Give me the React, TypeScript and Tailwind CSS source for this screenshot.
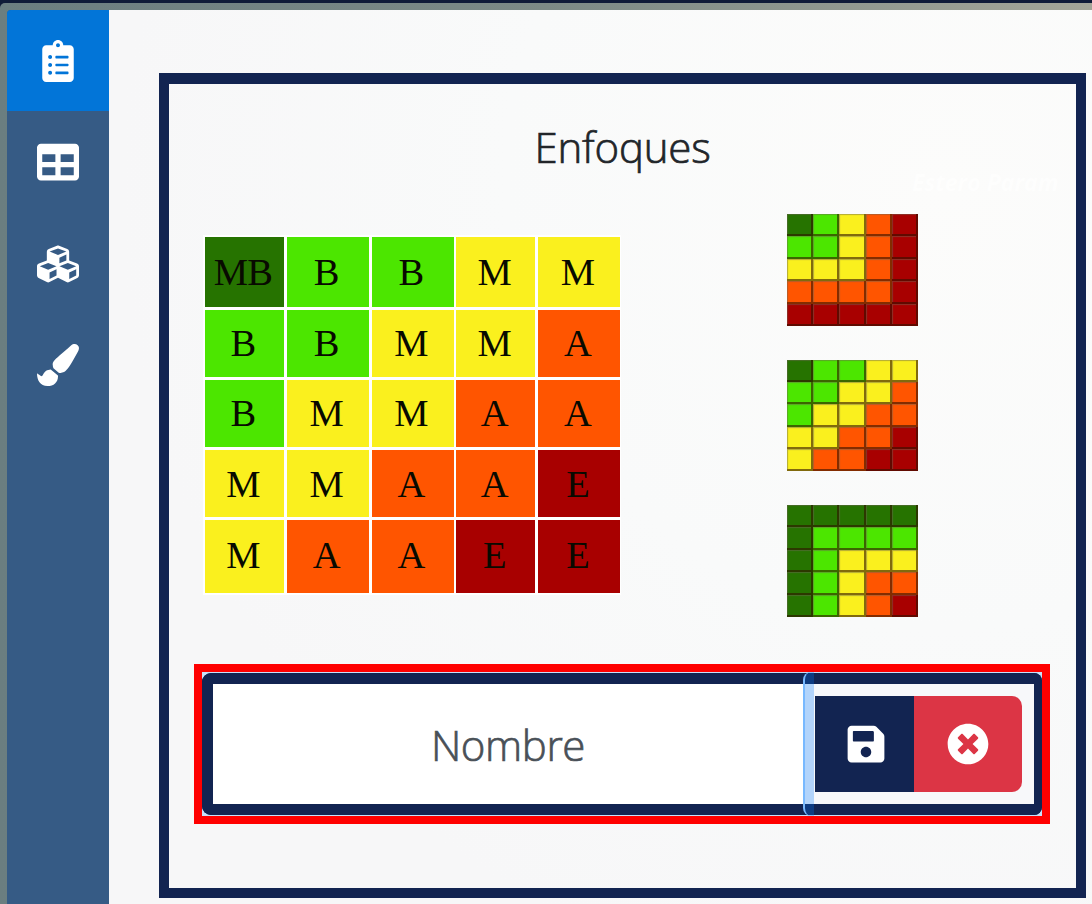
import React from 'react';
import { FaClipboardList, FaTable, FaCubes, FaPaintBrush, FaSave, FaTimesCircle } from 'react-icons/fa';

type Level = 'MB' | 'B' | 'M' | 'A' | 'E';

const fill: Record<Level, string> = {
  MB: 'bg-[#267300]',
  B: 'bg-[#4ce600]',
  M: 'bg-[#faf01e]',
  A: 'bg-[#ff5500]',
  E: 'bg-[#a80000]',
};

const parse = (rows: string[]): Level[] => rows.flatMap((row) => row.split(' ') as Level[]);

const balanced = parse(['MB B B M M', 'B B M M A', 'B M M A A', 'M M A A E', 'M A A E E']);
const pessimistic = parse(['MB B M A E', 'B B M A E', 'M M M A E', 'A A A A E', 'E E E E E']);
const optimistic = parse(['MB MB MB MB MB', 'MB B B B B', 'MB B M M M', 'MB B M A A', 'MB B M A E']);

const tabs = [FaClipboardList, FaTable, FaCubes, FaPaintBrush];

function Sidebar() {
  return (
    <nav className="flex w-[101.5px] shrink-0 flex-col overflow-hidden rounded-tl-[4px] bg-[#365b85]">
      {tabs.map((Icon, i) => (
        <button
          key={i}
          className={`flex h-[101.5px] shrink-0 items-center justify-center pt-[1px] pr-[0.5px] text-[42px] text-white ${i === 0 ? 'bg-[#0275d8]' : ''}`}
        >
          <Icon />
        </button>
      ))}
    </nav>
  );
}

function Matrix() {
  return (
    <div className="grid w-[418px] grid-cols-[79px_82px_82px_79px_82px] grid-rows-[70px_67px_67px_67px_73px] gap-x-[2.75px] gap-y-[3px] bg-white p-[2px] font-['Liberation_Serif',serif] text-[38.5px] leading-none tracking-[-0.8px] text-[#080a00]">
      {balanced.map((level, i) => (
        <div key={i} className={`flex items-center justify-center pr-[3px] ${fill[level]}`}>
          <span className={i < 15 ? '' : i < 20 ? 'mt-[2px]' : '-mt-[3px]'}>{level}</span>
        </div>
      ))}
    </div>
  );
}

function Thumbnail({ cells }: { cells: Level[] }) {
  return (
    <button className="grid h-[112px] w-[131px] grid-cols-5 grid-rows-5">
      {cells.map((level, i) => (
        <span
          key={i}
          className={`border-r-2 border-b-2 border-[#301000]/60 shadow-[inset_1px_1px_1px_rgba(110,100,80,0.5)] ${fill[level]}`}
        />
      ))}
    </button>
  );
}

function NameForm() {
  return (
    <div className="relative ml-[25px] flex h-[160px] w-[856px] border-8 border-[#ff0000] bg-[#c7e1fb]">
      <div className="mt-px mb-px flex w-[603px] items-center justify-center rounded-l-[9px] border-y-[11px] border-l-[11px] border-[#122451] bg-white">
        <span className="mt-[1px] mr-[2px] font-['Open_Sans',sans-serif] text-[42px] leading-none font-light tracking-[-0.4px] text-[#495057] [-webkit-text-stroke:0.7px_#495057]">
          Nombre
        </span>
      </div>
      <div className="mt-px mb-px flex flex-1 items-center rounded-r-[8px] border-y-[11px] border-r-8 border-[#122451] bg-[#f7f8fa] pl-[10px]">
        <button className="flex h-[96px] w-[99px] items-center justify-center bg-[#122451] pl-[3px] text-[42px] text-white">
          <FaSave />
        </button>
        <button className="flex h-[96px] w-[107.5px] items-center justify-center rounded-r-[10px] bg-[#dc3545] text-[42px] text-white">
          <FaTimesCircle />
        </button>
      </div>
      <div className="absolute top-0 left-[601px] h-[144px] w-[11px] rounded-l-[8px] border-l-2 border-[#78b9ff] bg-[#0075ff]/28" />
    </div>
  );
}

export default function App() {
  return (
    <div className="flex h-[904px] w-[1092px] flex-col overflow-hidden bg-[#0f1b38] pt-[2.5px]">
      <div className="flex flex-1 rounded-tl-[5px] bg-gradient-to-r from-[#6b7e80] via-[#7c8a86] to-[#a3a598] pt-[7px] pl-[7px]">
        <Sidebar />
        <main className="flex-1 bg-[radial-gradient(circle_at_85%_20%,#fcfcfb_0%,#f9fafa_40%,#f7f7f8_75%)] pt-[63.5px] pl-[50.5px]">
          <section className="relative h-[825px] w-[927px] border-x-[10px] border-t-[11px] border-b-[10px] border-[#122451]">
            <span className="absolute top-[83px] left-[743px] w-[163px] overflow-hidden font-['Open_Sans',sans-serif] text-[23px] leading-[30px] font-bold whitespace-nowrap text-white italic opacity-70">
              Estero Param
            </span>
            <h1 className="mt-[42px] h-[42px] text-center font-['Open_Sans',sans-serif] text-[42px] leading-[42px] font-light tracking-[-0.2px] text-[#212529] [-webkit-text-stroke:0.7px_#212529]">
              Enfoques
            </h1>
            <div className="flex h-[496px] pt-[46px] pl-[34px]">
              <div className="pt-[21px]">
                <Matrix />
              </div>
              <div className="ml-[166px] flex flex-col gap-[33.5px]">
                <Thumbnail cells={pessimistic} />
                <Thumbnail cells={balanced} />
                <Thumbnail cells={optimistic} />
              </div>
            </div>
            <NameForm />
          </section>
        </main>
      </div>
    </div>
  );
}
